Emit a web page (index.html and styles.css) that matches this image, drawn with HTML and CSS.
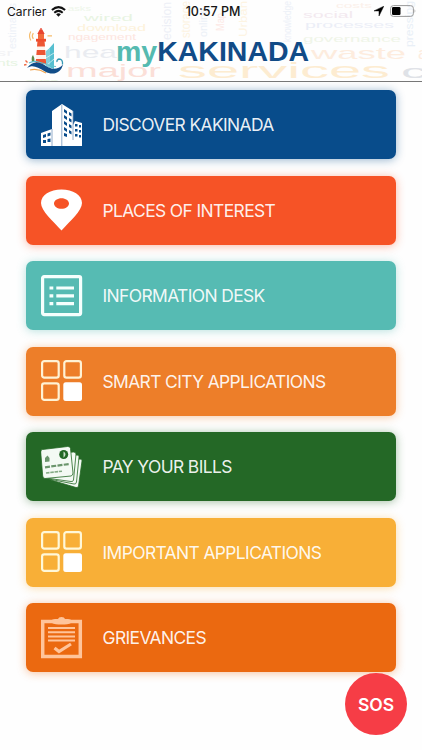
FILE: index.html
```html
<!DOCTYPE html>
<html lang="en">
<head>
    <meta charset="UTF-8">
    <meta name="viewport" content="width=device-width, initial-scale=1.0">
    <title>myKAKINADA</title>
    <link rel="stylesheet" href="styles.css">
</head>
<body>
    <header class="header">
        <!-- word cloud behind the title -->
        <svg class="cloud" width="422" height="81" viewBox="0 0 422 81" aria-hidden="true">
            <text transform="translate(16 49) rotate(-90)" font-size="11" textLength="46" lengthAdjust="spacingAndGlyphs" fill="#edf1f8">estimates</text>
            <text x="68" y="11" font-size="8" textLength="23" lengthAdjust="spacingAndGlyphs" fill="#edf6e9">asks</text>
            <text x="84" y="21" font-size="9" textLength="49" lengthAdjust="spacingAndGlyphs" fill="#e6f4e0">wired</text>
            <text x="77" y="31" font-size="9" textLength="69" lengthAdjust="spacingAndGlyphs" fill="#fdf1d7">download</text>
            <text x="68" y="40" font-size="9" textLength="68" lengthAdjust="spacingAndGlyphs" fill="#fde3dc">ngagement</text>
            <text x="64" y="58" font-size="17" textLength="60" lengthAdjust="spacingAndGlyphs" fill="#e8ebf0">heal</text>
            <text x="66" y="77" font-size="18" textLength="95" lengthAdjust="spacingAndGlyphs" fill="#fbdcd4">major</text>
            <text x="178" y="78" font-size="22" textLength="212" lengthAdjust="spacingAndGlyphs" fill="#fdebcd">services</text>
            <text x="401" y="78" font-size="18" textLength="38" lengthAdjust="spacingAndGlyphs" fill="#dcdfe5">ci</text>
            <text x="311" y="59" font-size="17" textLength="95" lengthAdjust="spacingAndGlyphs" fill="#fdebdb">waste</text>
            <text x="418" y="59" font-size="17" fill="#fdebdb">a</text>
            <text x="336" y="8" font-size="8" textLength="36" lengthAdjust="spacingAndGlyphs" fill="#fbefe8">costs</text>
            <text x="303" y="18" font-size="9" textLength="50" lengthAdjust="spacingAndGlyphs" fill="#f2e7ee">social</text>
            <text x="305" y="28" font-size="9" textLength="89" lengthAdjust="spacingAndGlyphs" fill="#eaedf7">processes</text>
            <text x="303" y="42" font-size="9" textLength="98" lengthAdjust="spacingAndGlyphs" fill="#eef5e6">governance</text>
            <text transform="translate(171 40) rotate(-90)" font-size="12" textLength="38" lengthAdjust="spacingAndGlyphs" fill="#eceef6">ecision</text>
            <text transform="translate(190 38) rotate(-90)" font-size="12" textLength="37" lengthAdjust="spacingAndGlyphs" fill="#fdf3df">storage</text>
            <text transform="translate(207 37) rotate(-90)" font-size="10" textLength="29" lengthAdjust="spacingAndGlyphs" fill="#eaeff7">online</text>
            <text transform="translate(224 31) rotate(-90)" font-size="10" textLength="18" lengthAdjust="spacingAndGlyphs" fill="#fde7e3">Map</text>
            <text transform="translate(247 37) rotate(-90)" font-size="10" textLength="36" lengthAdjust="spacingAndGlyphs" fill="#fdf3df">Urban</text>
            <text transform="translate(291 42) rotate(-90)" font-size="10" textLength="41" lengthAdjust="spacingAndGlyphs" fill="#ecf0f8">knowledge</text>
            <text transform="translate(413 47) rotate(-90)" font-size="10" textLength="46" lengthAdjust="spacingAndGlyphs" fill="#e7eef7">pressing</text>
            <text x="-3" y="66" font-size="9" textLength="21" lengthAdjust="spacingAndGlyphs" fill="#e4f4df">nts</text>
            <text x="-4" y="56" font-size="9" textLength="17" lengthAdjust="spacingAndGlyphs" fill="#f2f2f5">sr</text>
            <text x="24" y="86" font-size="11" textLength="36" lengthAdjust="spacingAndGlyphs" fill="#ebf7e5">am</text>
        </svg>
        <div class="status">
            <div class="carrier">
                <span>Carrier</span>
                <svg width="15" height="11" viewBox="0 0 15 11">
                    <g fill="none" stroke="#111" stroke-width="2">
                        <path d="M.9 4.1Q7.5-1.8 14.1 4.1"/>
                        <path d="M3.3 6.7Q7.5 3 11.7 6.7"/>
                    </g>
                    <path d="M5.1 8.3Q7.5 6.3 9.9 8.3L7.5 10.8Z" fill="#111"/>
                </svg>
            </div>
            <div class="clock">10:57 PM</div>
            <div class="indicators">
                <svg width="10" height="10" viewBox="0 0 10 10"><path d="M9.8.2L0 4.9H5V10Z" fill="#000" stroke="#000" stroke-width=".5"/></svg>
                <svg width="27" height="12" viewBox="0 0 27 12">
                    <rect x=".6" y=".6" width="22.8" height="10.8" rx="2.8" fill="none" stroke="#999"/>
                    <rect x="2" y="2" width="8.5" height="8" rx="1.2" fill="#000"/>
                    <path d="M24.6 4Q26.2 6 24.6 8Z" fill="#999"/>
                </svg>
            </div>
        </div>
        <div class="brand">
            <svg class="logo" width="42" height="46" viewBox="0 0 42 46">
                <path d="M22 24L30 15V41L22 38Z" fill="#56bfd0"/>
                <path d="M22 23L26 20V40L22 38Z" fill="#83d0dc"/>
                <path d="M22 30L30 25M23 37L30 31" stroke="#d9f2f5" stroke-width=".8"/>
                <path d="M13.5 13H20.5L22 37H11.8Z" fill="#fff3ec"/>
                <path d="M13.5 13H20.5L21 18.5H13ZM12.8 22H21.2L21.6 27H12.3ZM12 31H21.8L22.2 36H11.5Z" fill="#ed5634"/>
                <path d="M12 10.8H22V13.6H12Z" fill="#ee4d2e"/>
                <path d="M14 6H20V11H14Z" fill="#f26b3c"/>
                <path d="M13.3 6L15.7 1.5H18.3L20.7 6Z" fill="#e84530"/>
                <path d="M17 0V3" stroke="#e84530" stroke-width="1.3"/>
                <path d="M9.3 5Q7.3 8 9.3 11M6.8 3.5Q4.3 8 6.8 12.5M23.5 7.8H28" fill="none" stroke="#f6bc6c" stroke-width="1.2"/>
                <path d="M8 34Q7 29 9 27Q11 30 10.5 34Z" fill="#5d8a4a"/>
                <path d="M1.5 32.5L3.5 34.5M0 37L2.5 36.5" stroke="#ed6842" stroke-width="1.4"/>
                <path d="M3 40C9 32 16 34 22 38S34 42 39 36.5C37 45 29 48 21 43.500S9 36.5 3 40Z" fill="#114d88"/>
                <path d="M38.5 36.5Q39 31 35 31Q32.5 31.5 33 34" fill="none" stroke="#3599b5" stroke-width="1.3"/>
                <path d="M5 35C14 30 20 38 32 38.5" fill="none" stroke="#62c0ce" stroke-width="1.1"/>
                <path d="M6 42Q14 40 22 45" fill="none" stroke="#f0a44e" stroke-width="1.2"/>
            </svg>
            <h1 class="title"><span class="my">my</span>KAKINADA</h1>
        </div>
    </header>

    <main class="menu">
        <a class="card discover">
            <svg class="icon" viewBox="0 0 42 42">
                <path d="M0 29L11 25V7L21 0L32 7V21L34 17L41 19V42H0Z" fill="#fff"/>
                <path d="M20.8 1V42M11 25V42M32 7V36" stroke="#7697bd" stroke-width=".8"/>
                <path d="M23 5L26 7V10L23 8ZM28 8L30.5 9.5V12.5L28 11ZM23 11L26 13V16L23 14ZM28 14L30.5 15.5V18.5L28 17ZM23 17L26 19V22L23 20ZM28 20L30.5 21.5V24.5L28 23ZM23 23L26 25V28L23 26ZM28 26L30.5 27.5V30.5L28 29ZM23 29L26 30V33L23 32Z" fill="#084c8b"/>
                <path d="M2 31L5 30V33L2 34ZM6.5 29.5L9.5 28.5V31.5L6.5 32.5ZM2 36H5V39H2ZM6.5 35L9.5 34.5V38H6.5ZM34 20H36.5V22.5H34ZM38 21H40V23.5H38ZM34 25H36.5V27.5H34ZM38 26H40V28.5H38ZM34 30H36.5V32.5H34ZM38 31H40V33.5H38Z" fill="#084c8b"/>
                <path d="M27 42V33L31 31V42" fill="#fff"/>
            </svg>
            <span>DISCOVER KAKINADA</span>
        </a>
        <a class="card places">
            <svg class="icon" viewBox="0 0 42 42">
                <path fill="#fff" fill-rule="evenodd" d="M20.5.5C9 .5 0 6.2 0 14C0 22 12 32 20.5 41.5C29 32 41 22 41 14C41 6.2 32 .5 20.5 .5ZM20.5 9.2C24.6 9.2 28 11.5 28 14.5S24.6 19.8 20.5 19.8S13 17.5 13 14.5S16.4 9.2 20.5 9.2Z"/>
            </svg>
            <span>PLACES OF INTEREST</span>
        </a>
        <a class="card info">
            <svg class="icon" viewBox="0 0 42 42">
                <rect x="1.6" y="1.6" width="38" height="38" rx="1.5" fill="none" stroke="#f5fffd" stroke-width="3.2"/>
                <path d="M8.5 13H12.3M8.5 20.8H12.3M8.5 28.6H12.3M15.3 13H33M15.3 20.8H33M15.3 28.6H33" stroke="#f5fffd" stroke-width="3.2"/>
            </svg>
            <span>INFORMATION DESK</span>
        </a>
        <a class="card smart">
            <svg class="icon" viewBox="0 0 42 42">
                <g fill="none" stroke="#fff2d4" stroke-width="2.2">
                    <rect x="1.1" y="1.1" width="16.6" height="16.6" rx="2.2"/>
                    <rect x="23.3" y="1.1" width="16.6" height="16.6" rx="2.2"/>
                    <rect x="1.1" y="23.3" width="16.6" height="16.6" rx="2.2"/>
                </g>
                <rect x="22.3" y="22.3" width="18.7" height="18.7" rx="2.5" fill="#fff"/>
            </svg>
            <span>SMART CITY APPLICATIONS</span>
        </a>
        <a class="card bills">
            <svg class="icon" viewBox="0 0 42 42">
                <g fill="#f4faf4" stroke="#246826" stroke-width=".8">
                    <path d="M13 17L39 13Q41.5 13 41 15L37.5 40Q37 42 35 41.5L10 34Z"/>
                    <path d="M10 12L36 9Q38.5 9 38 11L35.5 36Q35 38.5 33 38L8 33Z"/>
                    <path d="M7 8L32.5 6Q35 6 35 8L32.5 34Q32 36 30 35.5L5 32Z"/>
                    <path d="M1.5 3.5L26.5.5Q29 0 29.5 2.5L32 27Q32 29.5 30 30L4 32.5Q2 32.5 1.7 30L-.3 6Q-.3 3.7 1.5 3.5Z"/>
                </g>
                <circle cx="22.7" cy="8.5" r="4.5" fill="#246826"/>
                <path d="M22.5 5.5Q26.5 8 22.5 11.7Z" fill="#c9dfca"/>
                <path d="M4 12L6.5 9.5L8.5 12V15.5L4 16Z" fill="#6b956c"/>
                <path d="M4 21.3L28 18" stroke="#6b956c" stroke-width="2.2" stroke-dasharray="5 1.3"/>
                <path d="M5 27L21 25.2" stroke="#84ab85" stroke-width="1.6" stroke-dasharray="3.5 .8"/>
            </svg>
            <span>PAY YOUR BILLS</span>
        </a>
        <a class="card important">
            <svg class="icon" viewBox="0 0 42 42">
                <g fill="none" stroke="#fff8d8" stroke-width="2.2">
                    <rect x="1.1" y="1.1" width="16.6" height="16.6" rx="2.2"/>
                    <rect x="23.3" y="1.1" width="16.6" height="16.6" rx="2.2"/>
                    <rect x="1.1" y="23.3" width="16.6" height="16.6" rx="2.2"/>
                </g>
                <rect x="22.3" y="22.3" width="18.7" height="18.7" rx="2.5" fill="#fff"/>
            </svg>
            <span>IMPORTANT APPLICATIONS</span>
        </a>
        <a class="card grievances">
            <svg class="icon" viewBox="0 0 42 42">
                <rect x="1.7" y="4.5" width="37.6" height="35" fill="none" stroke="#ffc49a" stroke-width="3.5"/>
                <path d="M11 6V3.5Q11 2 14 2H17Q17.5 0 20.5 0T24 2H27Q30 2 30 3.5V6Q27 7.5 20.5 7.5T11 6Z" fill="#ffc49a"/>
                <path d="M7 11H34M7 15.2H34M7 19.4H34M7 23.6H34" stroke="#ffc49a" stroke-width="2"/>
                <path d="M13.5 31L18 34.5L30 27" fill="none" stroke="#ffc49a" stroke-width="3.2"/>
            </svg>
            <span>GRIEVANCES</span>
        </a>
    </main>

    <button class="sos">SOS</button>
</body>
</html>
```
FILE: styles.css
```css
* {
    box-sizing: border-box;
}
body {
    margin: 0;
    height: 750px;
    overflow: hidden;
    background-color: #fefefe;
    font-family: Inter, "Liberation Sans", sans-serif;
}
.header {
    position: relative;
    height: 82px;
    border-bottom: 1px solid #777;
    overflow: hidden;
}
.cloud {
    position: absolute;
    top: 0;
    left: 0;
    font-family: "Liberation Sans", sans-serif;
    opacity: 0.9;
}
.status {
    position: relative;
    display: grid;
    grid-template-columns: 1fr auto 1fr;
    align-items: center;
    height: 22px;
    padding: 0 5px 0 7px;
    color: #151515;
    font-size: 12px;
}
.carrier {
    display: flex;
    align-items: center;
    gap: 5px;
}
.clock {
    padding-left: 2px;
    font-size: 12.5px;
    font-weight: 500;
}
.indicators {
    display: flex;
    align-items: center;
    justify-content: flex-end;
    gap: 6px;
}
.brand {
    position: relative;
    display: flex;
    padding: 6px 0 0 24px;
}
.logo {
    flex: none;
}
.title {
    margin: 7px 0 0 50px;
    color: #114b87;
    font-family: "Liberation Sans", Arial, sans-serif;
    font-size: 28.5px;
    line-height: 32px;
}
.my {
    color: #55bab0;
}
.menu {
    display: flex;
    flex-direction: column;
    gap: 16.5px;
    padding: 8px 26px 0;
}
.card {
    display: flex;
    align-items: center;
    gap: 19.5px;
    height: 69px;
    padding-left: 15px;
    border-radius: 7px;
    color: rgba(255, 255, 255, 0.93);
    font-size: 17.4px;
    letter-spacing: -0.6px;
}
.icon {
    flex: none;
    width: 42px;
    height: 42px;
}
.discover {
    background-color: #084c8b;
    box-shadow: 0 1px 10px rgba(8, 76, 139, 0.42);
}
.places {
    background-color: #f65326;
    box-shadow: 0 1px 10px rgba(246, 83, 38, 0.42);
}
.info {
    background-color: #56bbb3;
    box-shadow: 0 1px 10px rgba(86, 187, 179, 0.42);
}
.smart {
    background-color: #ed7e29;
    box-shadow: 0 1px 10px rgba(237, 126, 41, 0.42);
}
.bills {
    background-color: #246826;
    box-shadow: 0 1px 10px rgba(36, 104, 38, 0.42);
}
.important {
    background-color: #f8af37;
    box-shadow: 0 1px 10px rgba(248, 175, 55, 0.42);
}
.grievances {
    background-color: #eb6910;
    box-shadow: 0 1px 10px rgba(235, 105, 16, 0.42);
}
.sos {
    position: absolute;
    top: 673px;
    left: 345px;
    width: 62px;
    height: 62px;
    padding: 0;
    border: none;
    border-radius: 50%;
    background-color: #f63d46;
    color: #fff;
    font-family: inherit;
    font-size: 17.5px;
    font-weight: 600;
}
```
